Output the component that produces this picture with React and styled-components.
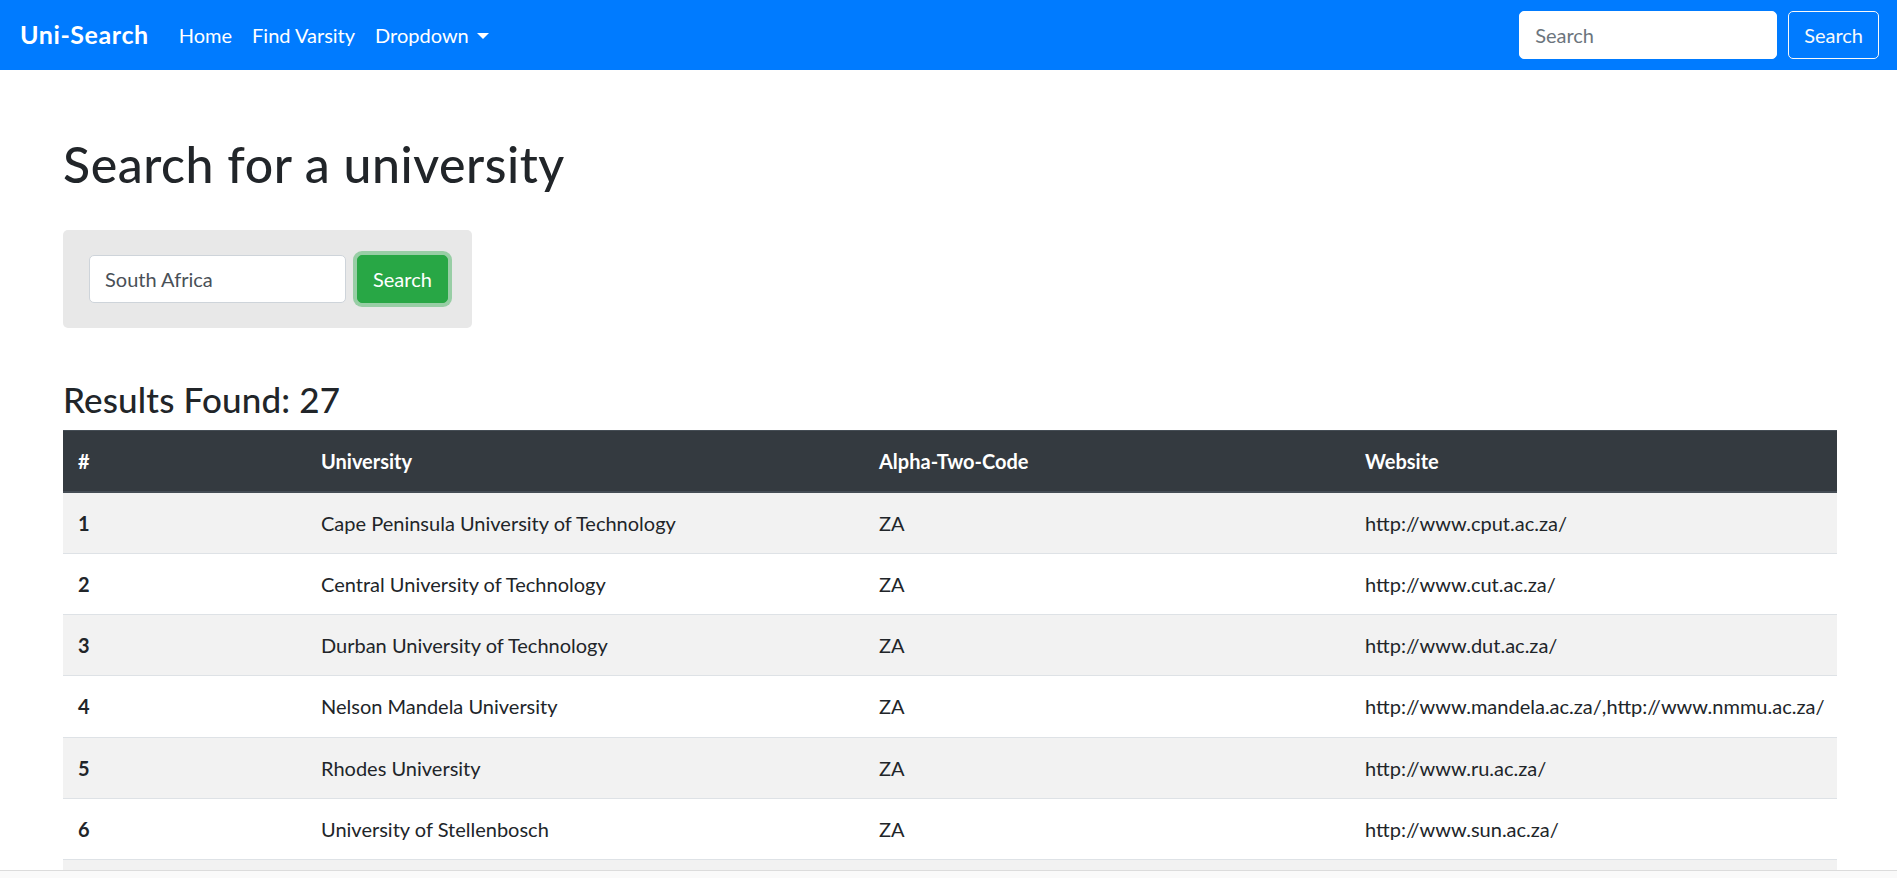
import React from "react";
import styled, { createGlobalStyle } from "styled-components";

const GlobalStyle = createGlobalStyle`
  *, *::before, *::after { box-sizing: border-box; }
  html, body { margin: 0; padding: 0; }
  body {
    font-family: Lato, "Noto Sans", "Liberation Sans", sans-serif;
    font-size: 20px;
    line-height: 1.5;
    color: #212529;
    background: #fff;
  }
`;

const Navbar = styled.nav`
  display: flex;
  align-items: center;
  justify-content: space-between;
  height: 70px;
  padding: 10px 18px 10px 20px;
  background: #007bff;
`;

const NavLeft = styled.div`
  display: flex;
  align-items: center;
`;

const Brand = styled.a`
  font-size: 25px;
  font-weight: 700;
  line-height: 37.5px;
  letter-spacing: 0.6px;
  color: #fff;
  text-decoration: none;
  margin-right: 20px;
  white-space: nowrap;
`;

const NavLinks = styled.ul`
  display: flex;
  list-style: none;
  margin: 0;
  padding: 0;
`;

const NavLink = styled.a`
  display: block;
  padding: 10px;
  line-height: 30px;
  color: #fff;
  text-decoration: none;
  white-space: nowrap;
  ${(p) =>
    p.$dropdown &&
    `
    &::after {
      content: "";
      display: inline-block;
      margin-left: 8px;
      vertical-align: 4px;
      border-top: 6px solid #fff;
      border-left: 6px solid transparent;
      border-right: 6px solid transparent;
    }
  `}
`;

const NavForm = styled.form`
  display: flex;
  align-items: center;
  gap: 11px;
`;

const Input = styled.input`
  height: 47.5px;
  width: ${(p) => p.$width}px;
  padding: 7.5px 15px;
  font-family: inherit;
  font-size: 20px;
  line-height: 30px;
  color: #495057;
  background: #fff;
  border: 1.25px solid ${(p) => (p.$onDark ? "#fff" : "#ced4da")};
  border-radius: 5px;
  outline: none;
  &::placeholder { color: #6c757d; }
`;

const Button = styled.button`
  height: 47.5px;
  padding: 7.5px 15px;
  font-family: inherit;
  font-size: 20px;
  line-height: 30px;
  border-radius: 5px;
  cursor: pointer;
  white-space: nowrap;
  color: ${(p) => (p.$variant === "success" ? "#fff" : "#f8f9fa")};
  background: ${(p) => (p.$variant === "success" ? "#28a745" : "transparent")};
  border: 1.25px solid ${(p) => (p.$variant === "success" ? "#28a745" : "#f8f9fa")};
  box-shadow: ${(p) => (p.$focused ? "0 0 0 4px rgba(72, 180, 97, 0.5)" : "none")};
`;

const Main = styled.main`
  padding: 64px 60px 0 63px;
`;

const Title = styled.h1`
  margin: 0 0 36px;
  font-size: 50px;
  font-weight: 500;
  line-height: 60px;
  letter-spacing: 0.55px;
`;

const SearchPanel = styled.form`
  display: flex;
  align-items: center;
  gap: 11px;
  width: 409px;
  padding: 25px 26px;
  background: #e8e8e8;
  border-radius: 5px;
`;

const ResultsHeading = styled.h3`
  margin: 50px 0 10px;
  font-size: 35px;
  font-weight: 500;
  line-height: 42px;
  letter-spacing: 0.15px;
`;

const Table = styled.table`
  width: 100%;
  table-layout: fixed;
  border-collapse: collapse;
  color: #212529;
`;

const HeadCell = styled.th`
  padding: 15px;
  line-height: 30px;
  text-align: left;
  font-weight: 700;
  color: #fff;
  background: #343a40;
  border-top: 1px solid #454d55;
  border-bottom: 2px solid #454d55;
  white-space: nowrap;
`;

const Row = styled.tr`
  background: ${(p) => (p.$striped ? "#f2f2f2" : "#fff")};
`;

const Cell = styled.td`
  padding: 15px;
  line-height: 30.25px;
  text-align: left;
  font-weight: ${(p) => (p.$bold ? 700 : 400)};
  border-top: 1px solid #dee2e6;
  vertical-align: top;
  white-space: nowrap;
`;

const ScrollStrip = styled.div`
  position: fixed;
  left: 0;
  right: 0;
  bottom: 0;
  height: 8px;
  background: #fafafa;
  border-top: 1px solid #dcdcdc;
`;

const universities = [
  ["Cape Peninsula University of Technology", "http://www.cput.ac.za/"],
  ["Central University of Technology", "http://www.cut.ac.za/"],
  ["Durban University of Technology", "http://www.dut.ac.za/"],
  ["Nelson Mandela University", "http://www.mandela.ac.za/,http://www.nmmu.ac.za/"],
  ["Rhodes University", "http://www.ru.ac.za/"],
  ["University of Stellenbosch", "http://www.sun.ac.za/"],
  ["Tshwane University of Technology", "http://www.tut.ac.za/"],
  ["University of Cape Town", "http://www.uct.ac.za/"],
  ["University of Fort Hare", "http://www.ufh.ac.za/"],
  ["University of Johannesburg", "http://www.uj.ac.za/"],
  ["University of KwaZulu-Natal", "http://www.ukzn.ac.za/"],
  ["University of Limpopo", "http://www.ul.ac.za/"],
  ["North West University", "http://www.nwu.ac.za/"],
  ["University of Pretoria", "http://www.up.ac.za/"],
  ["University of South Africa", "http://www.unisa.ac.za/"],
  ["University of the Free State", "http://www.ufs.ac.za/"],
  ["University of the Western Cape", "http://www.uwc.ac.za/"],
  ["University of the Witwatersrand", "http://www.wits.ac.za/"],
  ["University of Venda", "http://www.univen.ac.za/"],
  ["University of Zululand", "http://www.uzulu.ac.za/"],
  ["Vaal University of Technology", "http://www.vut.ac.za/"],
  ["Walter Sisulu University", "http://www.wsu.ac.za/"],
  ["Sol Plaatje University", "http://www.spu.ac.za/"],
  ["University of Mpumalanga", "http://www.ump.ac.za/"],
  ["Mangosuthu University of Technology", "http://www.mut.ac.za/"],
  ["Sefako Makgatho Health Sciences University", "http://www.smu.ac.za/"],
  ["Monash University South Africa", "http://www.monash.ac.za/"],
];

const columnWidths = [243, 558, 486, 487];

export default function App() {
  return (
    <>
      <GlobalStyle />
      <Navbar>
        <NavLeft>
          <Brand href="#">Uni-Search</Brand>
          <NavLinks>
            <li><NavLink href="#">Home</NavLink></li>
            <li><NavLink href="#">Find Varsity</NavLink></li>
            <li><NavLink href="#" $dropdown>Dropdown</NavLink></li>
          </NavLinks>
        </NavLeft>
        <NavForm onSubmit={(e) => e.preventDefault()}>
          <Input $width={258} $onDark placeholder="Search" />
          <Button type="submit">Search</Button>
        </NavForm>
      </Navbar>
      <Main>
        <Title>Search for a university</Title>
        <SearchPanel onSubmit={(e) => e.preventDefault()}>
          <Input $width={257} defaultValue="South Africa" />
          <Button type="submit" $variant="success" $focused>Search</Button>
        </SearchPanel>
        <ResultsHeading>Results Found: {universities.length}</ResultsHeading>
        <Table>
          <colgroup>
            {columnWidths.map((w, i) => (
              <col key={i} style={{ width: w }} />
            ))}
          </colgroup>
          <thead>
            <tr>
              <HeadCell>#</HeadCell>
              <HeadCell>University</HeadCell>
              <HeadCell>Alpha-Two-Code</HeadCell>
              <HeadCell>Website</HeadCell>
            </tr>
          </thead>
          <tbody>
            {universities.map(([name, site], i) => (
              <Row key={name} $striped={i % 2 === 0}>
                <Cell $bold>{i + 1}</Cell>
                <Cell>{name}</Cell>
                <Cell>ZA</Cell>
                <Cell>{site}</Cell>
              </Row>
            ))}
          </tbody>
        </Table>
      </Main>
      <ScrollStrip />
    </>
  );
}
